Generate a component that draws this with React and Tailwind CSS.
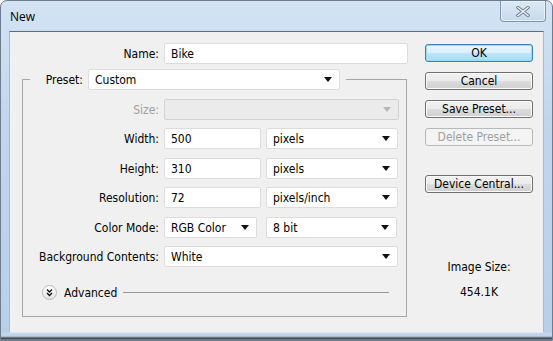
import React from 'react';

const Arrow = ({ disabled }) => (
    <svg width="8" height="5" viewBox="0 0 8 5" className="shrink-0">
        <path d="M0 0h8L4 5z" fill={disabled ? '#b8b8b8' : '#111'} />
    </svg>
);

const Field = ({ value, className = '' }) => (
    <div className={`flex h-[21px] items-center rounded-[2px] border border-[#dcdcdc] bg-white pl-[6px] ${className}`}>
        {value}
    </div>
);

const Select = ({ value, className = '', disabled }) => (
    <div
        className={`flex h-[21px] items-center justify-between rounded-[2px] border pl-[6px] pr-[7px] ${
            disabled ? 'border-[#d2d2d2] bg-[#ebebeb]' : 'border-[#dcdcdc] bg-white'
        } ${className}`}
    >
        <span>{value}</span>
        <Arrow disabled={disabled} />
    </div>
);

const Button = ({ children, primary, disabled, className = '' }) => (
    <div
        className={`flex h-[18px] w-[108px] items-center justify-center rounded-[3px] border ${
            primary
                ? 'border-[#3c7fb1] bg-[linear-gradient(180deg,#eaf6fd_0%,#d9f0fc_50%,#bee6fd_51%,#a7d9f5_100%)] shadow-[inset_0_0_0_1px_#9ad8f7]'
                : disabled
                ? 'border-[#b5b9bc] bg-[#f4f4f4] text-[#a0a0a0]'
                : 'border-[#707070] bg-[linear-gradient(180deg,#f2f2f2_0%,#ebebeb_50%,#dddddd_51%,#cfcfcf_100%)] shadow-[inset_0_0_0_1px_#fcfcfc]'
        } ${className}`}
    >
        {children}
    </div>
);

const Row = ({ label, gray, children, className = '' }) => (
    <div className={`flex h-[21px] items-center ${className}`}>
        <span className={`w-[141px] pr-[5px] text-right ${gray ? 'text-[#a0a0a0]' : ''}`}>{label}</span>
        {children}
    </div>
);

export default function App() {
    return (
        <div className="flex h-[341px] w-[553px] flex-col overflow-hidden rounded-t-[7px] border border-[#6d7d8f] bg-[linear-gradient(180deg,#d3e3f4_0%,#c1d6ed_35%,#b9cfe8_100%)] font-['DejaVu_Sans',sans-serif] text-[12px] text-black font-stretch-condensed">
            {/* Title bar */}
            <div className="flex h-[30px] shrink-0 items-start justify-between pl-[9px]">
                <span className="mt-[9px] font-['Open_Sans',sans-serif] text-[12px] leading-[14px] font-stretch-normal">New</span>
                <div className="mr-[6px] flex h-[21px] w-[46px] items-center justify-center rounded-b-[4px] border border-t-0 border-[#8395ab] bg-[linear-gradient(180deg,#dce8f5_0%,#c8d9ec_100%)] shadow-[inset_0_0_0_1px_#e8f0f9]">
                    <svg width="14" height="11" viewBox="0 0 14 11">
                        <path d="M2 1.5l10 8M12 1.5l-10 8" stroke="#6b7a8c" strokeWidth="3.2" strokeLinecap="square" />
                        <path d="M2 1.5l10 8M12 1.5l-10 8" stroke="#f4f7fb" strokeWidth="1.4" strokeLinecap="square" />
                    </svg>
                </div>
            </div>

            {/* Client area */}
            <div className="mx-[8px] flex h-[302px] shrink-0 border border-t-[#5d6d80] border-x-[#a9bacc] border-b-[#dfe8f2] bg-[#f0f0f0]">
                {/* Left section */}
                <div className="flex w-[398px] flex-col">
                    <div className="mt-[11px] flex h-[21px] items-center">
                        <span className="w-[154px] pr-[5px] text-right">Name:</span>
                        <Field value="Bike" className="w-[244px]" />
                    </div>

                    <fieldset className="mt-[5px] ml-[12px] w-[385px] border border-[#a6a6a6] pb-[16px]">
                        <legend className="ml-[7px] pr-[6px]">
                            <div className="flex h-[21px] items-center">
                                <span className="w-[58px] pr-[5px] text-right">Preset:</span>
                                <Select value="Custom" className="w-[252px]" />
                            </div>
                        </legend>

                        <Row label="Size:" gray className="mt-[9px]">
                            <Select value="" disabled className="w-[235px]" />
                        </Row>
                        <Row label="Width:" className="mt-[8px]">
                            <Field value="500" className="w-[97px]" />
                            <Select value="pixels" className="ml-[5px] w-[132px]" />
                        </Row>
                        <Row label="Height:" className="mt-[9px]">
                            <Field value="310" className="w-[97px]" />
                            <Select value="pixels" className="ml-[5px] w-[132px]" />
                        </Row>
                        <Row label="Resolution:" className="mt-[8px]">
                            <Field value="72" className="w-[97px]" />
                            <Select value="pixels/inch" className="ml-[5px] w-[132px]" />
                        </Row>
                        <Row label="Color Mode:" className="mt-[9px]">
                            <Select value="RGB Color" className="w-[93px]" />
                            <Select value="8 bit" className="ml-[9px] w-[131px]" />
                        </Row>
                        <Row label="Background Contents:" className="mt-[8px]">
                            <Select value="White" className="w-[234px]" />
                        </Row>

                        <div className="mt-[18px] ml-[19px] mr-[17px] flex h-[15px] items-center">
                            <svg width="15" height="15" viewBox="0 0 15 15" className="shrink-0">
                                <defs>
                                    <linearGradient id="adv" x1="0" y1="0" x2="0" y2="1">
                                        <stop offset="0" stopColor="#ffffff" />
                                        <stop offset="1" stopColor="#e3e3e3" />
                                    </linearGradient>
                                </defs>
                                <circle cx="7.5" cy="7.5" r="7" fill="url(#adv)" stroke="#b9b9b9" />
                                <path d="M5 4.5l2.5 2.5 2.5-2.5M5 8l2.5 2.5 2.5-2.5" fill="none" stroke="#111" strokeWidth="1.3" />
                            </svg>
                            <span className="ml-[7px]">Advanced</span>
                            <div className="ml-[6px] h-px flex-1 bg-[#9a9a9a]" />
                        </div>
                    </fieldset>
                </div>

                {/* Right column */}
                <div className="ml-[17px] flex flex-col items-center">
                    <Button primary className="mt-[12px]">OK</Button>
                    <Button className="mt-[10px]">Cancel</Button>
                    <Button className="mt-[10px]">Save Preset...</Button>
                    <Button disabled className="mt-[10px]">Delete Preset...</Button>
                    <Button className="mt-[29px]">Device Central...</Button>
                    <span className="mt-[67px] leading-[14px]">Image Size:</span>
                    <span className="mt-[11px] leading-[14px]">454.1K</span>
                </div>
            </div>

            {/* Bottom frame */}
            <div className="flex-1 bg-[linear-gradient(180deg,#c4d8ee_0%,#bcd1e9_45%,#3e4247_75%,#8a8f96_100%)]" />
        </div>
    );
}
